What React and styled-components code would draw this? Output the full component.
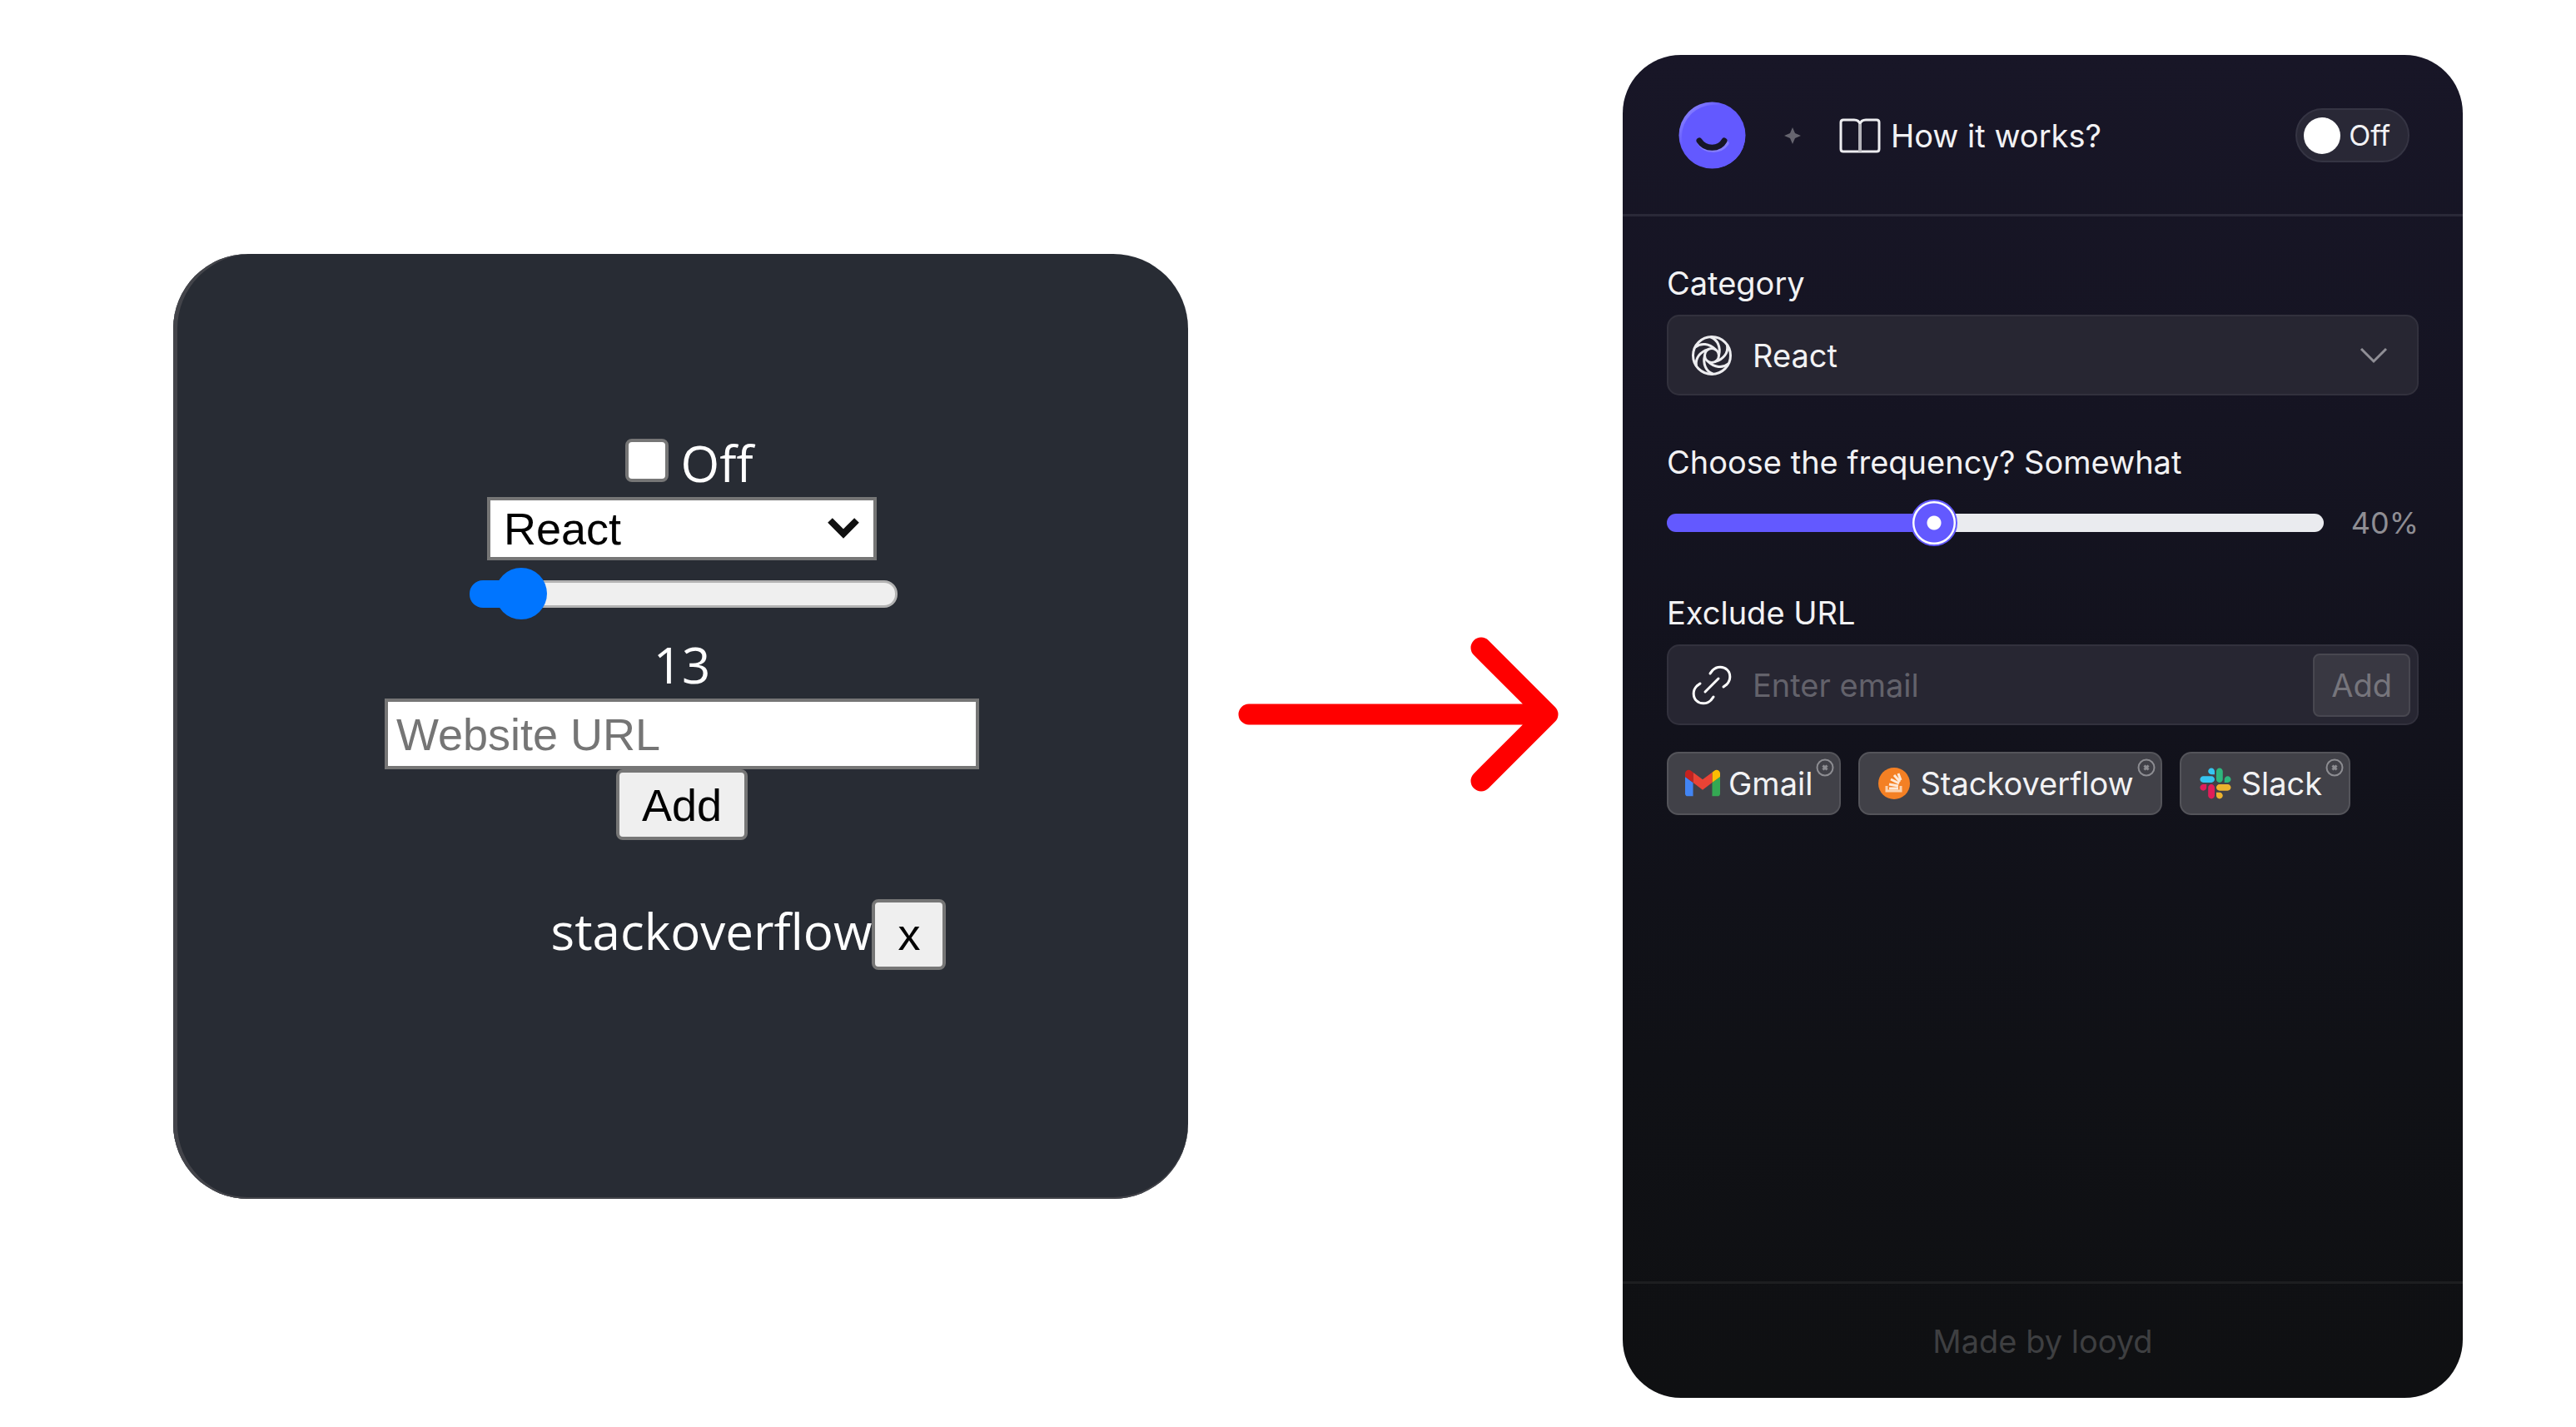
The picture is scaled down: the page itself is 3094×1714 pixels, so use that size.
import React, { useState } from "react";
import styled, { createGlobalStyle, css } from "styled-components";

const GlobalStyle = createGlobalStyle`
  *, *::before, *::after { box-sizing: border-box; }
  body { margin: 0; background: #ffffff; }
  button, input, select { font: inherit; color: inherit; margin: 0; }
`;

const Page = styled.main`
  display: grid;
  grid-template-columns: 1219fr 522fr 1009fr;
  align-items: center;
  padding: 66px 136px 35px 208px;
`;

/* ---------- before ---------- */

const BeforeCard = styled.section`
  display: flex;
  flex-direction: column;
  align-items: center;
  min-height: 1135px;
  padding: 210px 0 100px 3px;
  border-radius: 90px;
  background: #282c34;
  box-shadow: inset 5px 0 0 #43444a, inset 0 -2px 0 #43444a;
  color: #ffffff;
  font: 60px/82px "Open Sans", "Noto Sans", sans-serif;
`;

const TickLabel = styled.label`
  display: flex;
  align-items: flex-start;
  gap: 14px;
  padding-left: 18px;
`;

const Tick = styled.input`
  appearance: none;
  width: 52px;
  height: 52px;
  margin-top: 12px;
  border: 4px solid #767676;
  border-radius: 8px;
  background: #ffffff;
  &:checked { background: #0075ff; }
`;

const plainControl = css`
  border: 4px solid #767676;
  font: 54px/60px "Liberation Sans", Arial, sans-serif;
`;

const PlainSelectBox = styled.div`
  position: relative;
  display: flex;
  width: 468px;
`;

const PlainSelect = styled.select`
  ${plainControl}
  appearance: none;
  width: 100%;
  height: 76px;
  padding: 0 16px;
  border-radius: 0;
  background: #ffffff;
  color: #000000;
`;

const PlainChevron = styled.svg`
  position: absolute;
  right: 20px;
  top: 22px;
  width: 40px;
  height: 30px;
  pointer-events: none;
`;

const PlainRange = styled.input`
  appearance: none;
  width: 514px;
  height: 64px;
  margin: 8px 0 12px 3px;
  background: transparent;
  &::-webkit-slider-runnable-track {
    height: 33px;
    border: 3px solid transparent;
    border-radius: 16px;
    background:
      linear-gradient(90deg, #0075ff var(--fill), transparent var(--fill)) border-box,
      linear-gradient(#efefef, #efefef) padding-box,
      linear-gradient(#b2b2b2, #b2b2b2) border-box;
  }
  &::-webkit-slider-thumb {
    appearance: none;
    width: 62px;
    height: 62px;
    margin-top: -18px;
    border-radius: 50%;
    background: #0075ff;
  }
`;

const PlainInput = styled.input`
  ${plainControl}
  width: 714px;
  height: 85px;
  padding: 0 10px;
  border-radius: 0;
  background: #ffffff;
  color: #000000;
  &::placeholder { color: #757575; opacity: 1; }
`;

const PlainButton = styled.button`
  ${plainControl}
  height: 85px;
  padding: 0 27px;
  border-radius: 8px;
  background: #efefef;
  color: #000000;
`;

const PlainList = styled.ul`
  margin: 68px 0 0;
  padding: 0 0 0 160px;
  list-style: none;
`;

const PlainItem = styled.li`
  display: flex;
  align-items: baseline;
`;

/* ---------- arrow ---------- */

const ArrowBox = styled.div`
  display: flex;
  padding: 0 77px 30px 60px;
  svg { width: 100%; height: auto; }
`;

/* ---------- after ---------- */

const AfterCard = styled.section`
  display: flex;
  flex-direction: column;
  min-height: 1613px;
  border-radius: 70px;
  overflow: hidden;
  background: linear-gradient(#181627 0%, #151422 27%, #12121c 50%, #101116 75%, #0f1012 100%);
  color: #f2f2f4;
  font: 38px/46px Inter, "Liberation Sans", sans-serif;
`;

const Header = styled.header`
  display: flex;
  align-items: center;
  gap: 46px;
  height: 194px;
  padding: 2px 64px 0 67px;
  border-bottom: 3px solid #2a2938;
`;

const Icon = styled.svg`
  display: block;
  flex: none;
  width: ${(p) => p.$w}px;
  height: ${(p) => p.$h || p.$w}px;
`;

const HelpLink = styled.a`
  display: flex;
  align-items: center;
  gap: 12px;
  color: inherit;
  text-decoration: none;
`;

const Toggle = styled.label`
  display: flex;
  align-items: center;
  gap: 10px;
  height: 65px;
  margin-left: auto;
  padding: 0 21px 0 8px;
  border: 2px solid #353443;
  border-radius: 33px;
  background: #292836;
  font-size: 34px;
`;

const Knob = styled.input`
  appearance: none;
  width: 44px;
  height: 44px;
  border-radius: 50%;
  background: #ffffff;
  &:checked { background: #6359ff; }
`;

const Body = styled.div`
  display: flex;
  flex: 1;
  flex-direction: column;
  gap: 57px;
  padding: 57px 53px;
`;

const Group = styled.div`
  display: flex;
  flex-direction: column;
  gap: 15px;
`;

const Field = styled.div`
  position: relative;
  display: flex;
  align-items: center;
  gap: 24px;
  height: 97px;
  padding: 0 8px 0 27px;
  border: 2px solid #32313d;
  border-radius: 15px;
  background: #272632;
`;

const Select = styled.select`
  appearance: none;
  flex: 1;
  height: 100%;
  padding: 0;
  border: 0;
  outline: 0;
  background: transparent;
  option { color: #000000; }
`;

const Chevron = styled(Icon)`
  position: absolute;
  right: 35px;
  pointer-events: none;
`;

const SliderRow = styled.div`
  display: flex;
  align-items: center;
  gap: 33px;
  padding-top: 6px;
`;

const Slider = styled.input`
  appearance: none;
  flex: 1;
  min-width: 0;
  height: 57px;
  background: transparent;
  &::-webkit-slider-runnable-track {
    height: 22px;
    border-radius: 11px;
    background: linear-gradient(90deg, #6359ff var(--fill), #eaebef var(--fill));
  }
  &::-webkit-slider-thumb {
    appearance: none;
    width: 56px;
    height: 56px;
    margin-top: -17px;
    border: 2px solid #6359ff;
    border-radius: 50%;
    background: radial-gradient(circle, #ffffff 8px, #6359ff 9px, #6359ff 23px, #ffffff 24px, #ffffff 26px);
  }
`;

const Percent = styled.output`
  color: #8f8e94;
  font-size: 36px;
`;

const UrlInput = styled.input`
  flex: 1;
  min-width: 0;
  height: 100%;
  padding: 0;
  border: 0;
  outline: 0;
  background: transparent;
  &::placeholder { color: #63626b; opacity: 1; }
`;

const AddButton = styled.button`
  height: 76px;
  padding: 0 20px;
  border: 2px solid #484750;
  border-radius: 8px;
  background: #393842;
  color: #76757c;
`;

const Chips = styled.ul`
  display: flex;
  flex-wrap: wrap;
  gap: 21px;
  margin: 17px 0 0;
  padding: 0;
  list-style: none;
`;

const Chip = styled.li`
  display: flex;
  align-items: center;
  gap: 10px;
  height: 76px;
  padding: 0 6px 0 20px;
  border: 2px solid #54545a;
  border-radius: 14px;
  background: #414148;
`;

const ChipName = styled.span`
  margin-right: -6px;
`;

const ChipClose = styled.button`
  align-self: flex-start;
  margin-top: 6px;
  padding: 0;
  border: 0;
  background: transparent;
  color: #8d8d92;
`;

const Footer = styled.footer`
  display: flex;
  align-items: center;
  justify-content: center;
  height: 140px;
  border-top: 3px solid #1d1e20;
  color: #3e3f41;
`;

/* ---------- drawings ---------- */

const Logo = () => (
  <Icon $w={81} viewBox="0 0 81 81" aria-hidden="true">
    <defs>
      <linearGradient id="rim" x1="0" y1="0" x2="1" y2="1">
        <stop offset="0" stopColor="#9a94ff" />
        <stop offset="0.35" stopColor="#6359ff" />
      </linearGradient>
    </defs>
    <circle cx="40.500" cy="40.500" r="40" fill="url(#rim)" />
    <circle cx="42" cy="42" r="38" fill="#6359ff" />
    <path d="M26 49C32 60 50 60 57 50" fill="none" stroke="#857dff" strokeWidth="7" strokeLinecap="round" />
    <path d="M25 47C32 58 49 58 55 47" fill="none" stroke="#171626" strokeWidth="7" strokeLinecap="round" />
  </Icon>
);

const Plus = () => (
  <Icon $w={20} viewBox="0 0 20 20" aria-hidden="true">
    <path d="M10 0L13 7L20 10L13 13L10 20L7 13L0 10L7 7Z" fill="#66656f" />
  </Icon>
);

const Book = () => (
  <Icon $w={50} $h={44} viewBox="0 0 50 44" fill="none" stroke="#ededf0" strokeWidth="3" strokeLinejoin="round" aria-hidden="true">
    <path d="M25 8C24 4 21 3 18 3H5C3 3 2 4 2 6V38C2 40 3 41 5 41H45C47 41 48 40 48 38V6C48 4 47 3 45 3H32C29 3 26 4 25 8Z" />
    <path d="M25 8V41" stroke="#b4b3b9" strokeWidth="4" />
  </Icon>
);

const Aperture = () => (
  <Icon $w={50} viewBox="0 0 50 50" fill="none" stroke="#ededf0" strokeWidth="3" strokeLinecap="round" aria-hidden="true">
    <circle cx="25" cy="25" r="22.500" />
    <circle cx="25" cy="25" r="8.500" />
    {[0, 60, 120, 180, 240, 300].map((a) => (
      <path key={a} d="M24 3C32 6 36 15 33.500 25" transform={`rotate(${a} 25 25)`} />
    ))}
  </Icon>
);

const LinkIcon = () => (
  <Icon $w={50} viewBox="0 0 50 50" fill="none" stroke="#ffffff" strokeWidth="3" strokeLinecap="round" aria-hidden="true">
    <path d="M17 33L33 17" />
    <path d="M23 11L26 7C31 2 39 2 43.500 6.500C48 11 48 19 43 24L39 27" />
    <path d="M11 23L7 26C2 31 2 39 6.500 43.500C11 48 19 48 24 43L27 39" />
  </Icon>
);

const GmailIcon = () => (
  <Icon $w={42} viewBox="52 38 88 76" aria-hidden="true">
    <path fill="#4285f4" d="M58 108h14V74L52 59v43c0 3.320 2.690 6 6 6" />
    <path fill="#34a853" d="M120 108h14c3.320 0 6-2.690 6-6V59l-20 15" />
    <path fill="#fbbc04" d="M120 48v26l20-15v-8c0-7.420-8.470-11.650-14.400-7.200" />
    <path fill="#ea4335" d="M72 74V48l24 18 24-18v26L96 92" />
    <path fill="#c5221f" d="M52 51v8l20 15V48l-5.600-4.200c-5.940-4.450-14.400-.220-14.400 7.200" />
  </Icon>
);

const StackIcon = () => (
  <Icon $w={42} viewBox="0 0 42 42" aria-hidden="true">
    <circle cx="21" cy="21" r="19" fill="#f48024" />
    <path d="M12 24V30H29V24" fill="none" stroke="#fbd3b0" strokeWidth="3" />
    <g stroke="#fde9d8" strokeWidth="3">
      <path d="M15 27H26M15 22L26 24M17 16L27 21M21 11L28 19M26 9L29 17" />
    </g>
  </Icon>
);

const SlackIcon = () => (
  <Icon $w={42} viewBox="-8 -8 139 139" aria-hidden="true">
    <path fill="#e01e5a" d="M25.800 77.600c0 7.100-5.800 12.900-12.900 12.900S0 84.700 0 77.600s5.800-12.900 12.900-12.900h12.900v12.900zm6.500 0c0-7.100 5.800-12.900 12.900-12.900s12.900 5.800 12.900 12.900v32.300c0 7.100-5.800 12.900-12.900 12.900s-12.900-5.800-12.900-12.900V77.600z" />
    <path fill="#36c5f0" d="M45.200 25.800c-7.100 0-12.900-5.800-12.900-12.900S38.100 0 45.200 0s12.900 5.800 12.900 12.900v12.900H45.200zm0 6.500c7.100 0 12.900 5.800 12.900 12.900s-5.800 12.900-12.900 12.900H12.900C5.800 58.100 0 52.300 0 45.200s5.800-12.900 12.900-12.900h32.300z" />
    <path fill="#2eb67d" d="M97 45.200c0-7.100 5.800-12.900 12.900-12.900s12.900 5.800 12.900 12.900-5.800 12.900-12.900 12.900H97V45.200zm-6.500 0c0 7.100-5.800 12.900-12.900 12.900s-12.900-5.800-12.900-12.900V12.900C64.700 5.800 70.500 0 77.600 0s12.900 5.800 12.900 12.900v32.300z" />
    <path fill="#ecb22e" d="M77.600 97c7.100 0 12.900 5.800 12.900 12.900s-5.800 12.900-12.900 12.900-12.900-5.800-12.900-12.900V97h12.900zm0-6.500c-7.100 0-12.900-5.800-12.900-12.900s5.800-12.900 12.900-12.900h32.300c7.100 0 12.900 5.800 12.900 12.900s-5.800 12.900-12.900 12.900H77.600z" />
  </Icon>
);

const CloseIcon = () => (
  <Icon $w={22} viewBox="0 0 22 22" fill="none" stroke="currentColor" aria-hidden="true">
    <circle cx="11" cy="11" r="9.500" strokeWidth="2" />
    <path d="M8.500 8.500L13.500 13.500M13.500 8.500L8.500 13.500" strokeWidth="3" />
  </Icon>
);

/* ---------- panels ---------- */

const PLAIN_MAX = 200;

function Before() {
  const [value, setValue] = useState(13);
  return (
    <BeforeCard>
      <TickLabel>
        <Tick type="checkbox" />
        Off
      </TickLabel>
      <PlainSelectBox>
        <PlainSelect aria-label="Category" defaultValue="React">
          <option>React</option>
        </PlainSelect>
        <PlainChevron viewBox="0 0 40 30" aria-hidden="true">
          <path d="M4 6L20 22L36 6" fill="none" stroke="#101010" strokeWidth="8" />
        </PlainChevron>
      </PlainSelectBox>
      <PlainRange
        type="range"
        aria-label="Frequency"
        min="0"
        max={PLAIN_MAX}
        value={value}
        onChange={(e) => setValue(Number(e.target.value))}
        style={{ "--fill": `${6 + (value / PLAIN_MAX) * 88}%` }}
      />
      <div>{value}</div>
      <PlainInput type="text" aria-label="Website URL" placeholder="Website URL" />
      <PlainButton type="button">Add</PlainButton>
      <PlainList>
        <PlainItem>
          stackoverflow
          <PlainButton type="button" aria-label="Remove stackoverflow">x</PlainButton>
        </PlainItem>
      </PlainList>
    </BeforeCard>
  );
}

const SITES = [
  { name: "Gmail", Logo: GmailIcon },
  { name: "Stackoverflow", Logo: StackIcon },
  { name: "Slack", Logo: SlackIcon },
];

function After() {
  const [value, setValue] = useState(40);
  return (
    <AfterCard>
      <Header>
        <Logo />
        <Plus />
        <HelpLink href="#how">
          <Book />
          How it works?
        </HelpLink>
        <Toggle>
          <Knob type="checkbox" role="switch" />
          Off
        </Toggle>
      </Header>
      <Body>
        <Group>
          <label htmlFor="category">Category</label>
          <Field>
            <Aperture />
            <Select id="category" defaultValue="React">
              <option>React</option>
            </Select>
            <Chevron $w={34} $h={20} viewBox="0 0 34 20" aria-hidden="true">
              <path d="M2 2L17 17L32 2" fill="none" stroke="#908f96" strokeWidth="3" />
            </Chevron>
          </Field>
        </Group>
        <Group>
          <label htmlFor="frequency">Choose the frequency? Somewhat</label>
          <SliderRow>
            <Slider
              id="frequency"
              type="range"
              min="0"
              max="100"
              value={value}
              onChange={(e) => setValue(Number(e.target.value))}
              style={{ "--fill": `${value}%` }}
            />
            <Percent htmlFor="frequency">{value}%</Percent>
          </SliderRow>
        </Group>
        <Group>
          <label htmlFor="exclude">Exclude URL</label>
          <Field>
            <LinkIcon />
            <UrlInput id="exclude" type="text" placeholder="Enter email" />
            <AddButton type="button">Add</AddButton>
          </Field>
          <Chips>
            {SITES.map(({ name, Logo: SiteLogo }) => (
              <Chip key={name}>
                <SiteLogo />
                <ChipName>{name}</ChipName>
                <ChipClose type="button" aria-label={`Remove ${name}`}>
                  <CloseIcon />
                </ChipClose>
              </Chip>
            ))}
          </Chips>
        </Group>
      </Body>
      <Footer>Made by looyd</Footer>
    </AfterCard>
  );
}

export default function App() {
  return (
    <>
      <GlobalStyle />
      <Page>
        <Before />
        <ArrowBox>
          <svg viewBox="0 0 385 186" role="img" aria-label="becomes">
            <path
              d="M13 93H372M292 13L372 93L292 173"
              fill="none"
              stroke="#ff0000"
              strokeWidth="25"
              strokeLinecap="round"
              strokeLinejoin="round"
            />
          </svg>
        </ArrowBox>
        <After />
      </Page>
    </>
  );
}
